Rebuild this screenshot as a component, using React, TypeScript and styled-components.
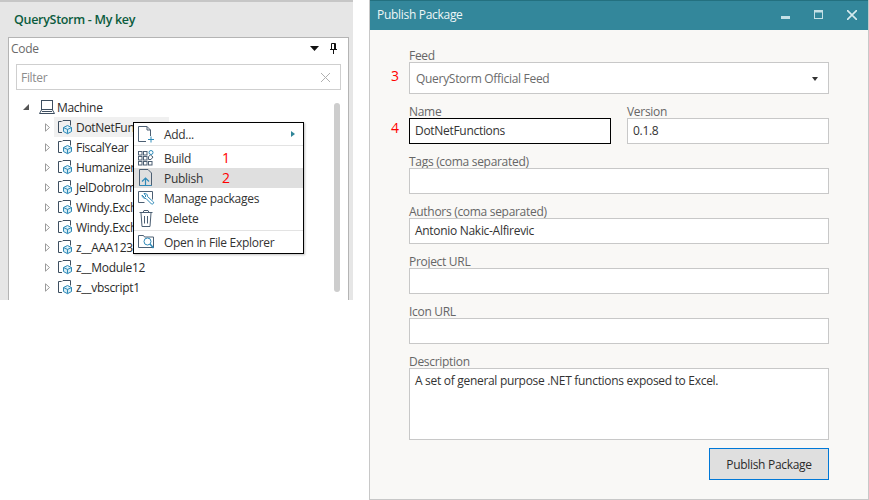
import React from "react";
import styled, { createGlobalStyle } from "styled-components";

const Global = createGlobalStyle`
  html, body { margin: 0; padding: 0; background: #fff; }
  body { font-family: "Open Sans", "Noto Sans", sans-serif; font-size: 12px; letter-spacing: -0.3px; width: 869px; height: 500px; overflow: hidden; }
`;
const Page = styled.div`display: flex; width: 869px; height: 500px; align-items: flex-start; gap: 16px;`;
const Left = styled.section`
  position: relative; width: 353px; height: 300px; flex: none; box-sizing: border-box;
  background: #e6e6e6; border-top: 2px solid #c6c6c6; padding: 0 4px 0 8px;
  display: flex; flex-direction: column;
`;
const AppTitle = styled.h1`
  margin: 0 0 0 6px; height: 35px; line-height: 36px; font-size: 12.5px; font-weight: 600; color: #0c5c3e; letter-spacing: -0.3px;
`;
const CodeBox = styled.div`
  flex: 1; background: #fff; border: 1px solid #b4b4b4; border-bottom: 0; padding: 0 7px; position: relative; display: flex; flex-direction: column;
`;
const CodeHead = styled.div`display: flex; align-items: center; height: 20px; margin: 0 -7px; padding: 0 11px 0 2px; justify-content: space-between; color: #6a6a6a; font-size: 12px;`;
const HeadIcons = styled.div`display: flex; gap: 11px; align-items: center;`;
const Filter = styled.div`
  margin-top: 6px; height: 26px; box-sizing: border-box; border: 1px solid #cfcfcf; display: flex; align-items: center; justify-content: space-between; padding: 0 10px 0 4px; color: #8c8c8c;
`;
const Tree = styled.div`margin-top: 7px; display: flex; flex-direction: column;`;
const Row = styled.div<{ $depth: number }>`
  height: 20px; display: flex; align-items: center; color: #2a2a2a; white-space: nowrap; position: relative;
  margin-left: ${(p) => (p.$depth ? 28 : 6)}px; width: ${(p) => (p.$depth ? 276 : 298)}px;
`;
const RowBg = styled.span`position: absolute; left: 10px; top: 0; bottom: 0; width: 115px; background: #f0f0f0;`;
const RowIcon = styled.span<{ $root?: boolean }>`display: inline-flex; position: relative; flex: none; margin: 0 ${(p) => (p.$root ? 2 : 3)}px 0 ${(p) => (p.$root ? 9 : 6)}px;`;
const RowText = styled.span`position: relative; font-size: 12px;`;
const Scroll = styled.div`position: absolute; left: 325px; top: 65px; bottom: 8px; width: 6px; background: #cdcdcd; border-radius: 3px;`;
const Menu = styled.div`
  position: absolute; left: 133px; top: 120px; width: 171px; height: 132px; box-sizing: border-box; background: #fff; border: 1px solid #000;
  box-shadow: 1px 1px 2px rgba(0,0,0,.25); padding-top: 1px; display: flex; flex-direction: column; color: #333;
`;
const MenuRow = styled.div<{ $active?: boolean; $h?: number }>`
  height: ${(p) => p.$h ?? 20}px; display: flex; align-items: center; position: relative; background: ${(p) => (p.$active ? "#dfdfdf" : "transparent")};
`;
const MenuIcon = styled.span`width: 24px; margin-right: 6px; flex: none; display: flex; justify-content: center;`;
const MenuLabel = styled.span`width: 58px; flex: none; white-space: nowrap; font-size: 12px;`;
const Sep = styled.div<{ $last?: boolean }>`height: 1px; flex: none; background: #e3e3e3; margin: ${(p) => (p.$last ? "2px 0 0" : "1px 0 2px")};`;
const RedNum = styled.span`color: #f00; font-size: 14px; line-height: 1; letter-spacing: 0;`;
const Arrow = styled.span`position: absolute; right: 8px; top: 7px; border-left: 4px solid #2f8598; border-top: 3.5px solid transparent; border-bottom: 3.5px solid transparent;`;

const Dialog = styled.section`
  width: 500px; height: 500px; flex: none; box-sizing: border-box; border: 1px solid #c8c8c8; border-top: 0; background: #f9f8f6;
  display: flex; flex-direction: column;
`;
const TitleBar = styled.header`
  height: 30px; flex: none; box-sizing: border-box; background: #33879b; border-top: 1px solid #23707f; color: #eef6f7; display: flex; align-items: center; justify-content: space-between; padding: 0 11px 2px 7px; font-size: 12px; font-weight: 400;
`;
const WinButtons = styled.div`display: flex; gap: 24px; align-items: center;`;
const Form = styled.form`padding: 8px 39px 0 39px; display: flex; flex-direction: column; position: relative; flex: 1;`;
const Field = styled.div`display: flex; flex-direction: column; position: relative; flex: 1;`;
const FixedField = styled(Field)`flex: none;`;
const Line = styled.div`display: flex; gap: 16px;`;
const Label = styled.label`height: 12px; line-height: 12px; color: #666; font-size: 12px; margin-top: 12px; white-space: nowrap;`;
const Input = styled.div<{ $h?: number; $focus?: boolean }>`
  box-sizing: border-box; height: ${(p) => p.$h ?? 26}px; background: #fff; border: 1px solid ${(p) => (p.$focus ? "#000" : "#c8c8c8")};
  padding: 4px 5px 0 5px; color: #333; line-height: 16px; font-size: 12px; display: flex; justify-content: space-between;
`;
const Select = styled(Input)`align-items: center; padding: 1px 10px 0 6px; color: #6b6b6b; height: 32px;`;
const Caret = styled.span`border-top: 4px solid #333; border-left: 3.5px solid transparent; border-right: 3.5px solid transparent;`;
const Annot = styled(RedNum)<{ $top: number }>`position: absolute; left: -18px; top: ${(p) => p.$top}px;`;
const Actions = styled.div`display: flex; justify-content: flex-end; margin-top: 8px;`;
const Btn = styled.button`
  width: 120px; height: 32px; box-sizing: border-box; background: #dfdfdf; border: 1px solid #0078d7; font: inherit; letter-spacing: inherit; font-size: 12px; color: #2b2b2b; padding: 0;
`;

const Stroke = "#4c5f73", Blue = "#2f8ab8";

const Pkg = () => (
  <svg width="16" height="16" viewBox="0 0 16 16" fill="none">
    <path d="M5 13.5H1.5V2.5h3M5 2.5l1-1h7.5v5" stroke="#3d4e60" strokeWidth="1" />
    <path d="M10.5 6.5l4 2v4l-4 2.2-4-2.2v-4z" fill="#d6edf6" stroke={Blue} strokeWidth="1" />
    <path d="M6.5 8.5l4 2 4-2M10.5 10.5v4" stroke={Blue} strokeWidth="1" />
  </svg>
);
const Machine = () => (
  <svg width="16" height="16" viewBox="0 0 16 16" fill="none" stroke="#3d4e60">
    <rect x="2.5" y="1.5" width="11" height="9" />
    <path d="M2.5 11l-2 3.5h15l-2-3.5M3 12.500h10" />
  </svg>
);
const Expander = ({ open }: { open?: boolean }) =>
  open ? (
    <svg width="8" height="8" viewBox="0 0 8 8"><path d="M7 1v6H1z" fill="#555" /></svg>
  ) : (
    <svg width="7" height="9" viewBox="0 0 7 9" fill="#fff" stroke="#9a9a9a"><path d="M1.5 .8l4 3.7-4 3.7z" /></svg>
  );
const AddIco = () => (
  <svg width="17" height="17" viewBox="0 0 17 17" fill="none" stroke={Stroke}>
    <path d="M8 15.500H.5V.5H9l3.500 3.500v6M9 .5V4h3.500" />
    <path d="M13 10.500v6M10 13.500h6" stroke={Blue} />
  </svg>
);
const BuildIco = () => (
  <svg width="16" height="16" viewBox="0 0 16 16" fill="none" stroke={Stroke}>
    {[1, 6, 11].map((y) => [0, 5].map((x) => <rect key={`${x}${y}`} x={x + 0.5} y={y + 0.5} width="3.500" height="3.500" />))}
    <rect x="10.500" y="11.500" width="3.500" height="3.500" />
    <path d="M10.500 6.500l2-1.500 2.500 2-2 2.500h-2.500z" />
    <circle cx="13" cy="2.500" r="2" stroke={Blue} />
  </svg>
);
const PubIco = () => (
  <svg width="16" height="18" viewBox="0 0 16 18" fill="none" stroke={Stroke}>
    <path d="M1.500 16.500V.5H10l3.500 3.500v12.500z" />
    <path d="M7.500 16V9M4 12.500l3.500-3.500 3.500 3.500M1.500 16.500h12" stroke={Blue} strokeWidth="1.200" />
  </svg>
);
const ManageIco = () => (
  <svg width="17" height="17" viewBox="0 0 17 17" fill="none" stroke={Stroke}>
    <path d="M.5 12.500V1.500h14v8M.5 12.500h6" />
    <path d="M4 5l2.500 2.500 1.500-1.500-2-2.500c2-.5 4 1 3.500 3l6 5.500c.5 1-.5 2.500-2 2L8 8.500C6 9 4 7 4 5z" fill="#fff" stroke={Blue} />
  </svg>
);
const TrashIco = () => (
  <svg width="14" height="17" viewBox="0 0 14 17" fill="none" stroke={Stroke}>
    <path d="M.5 2.500h13M4 2.500l1-2h4l1 2M2 3l1 13.500h8L12 3M5.500 6v7.500M8.500 6v7.500" />
  </svg>
);
const ExplorerIco = () => (
  <svg width="17" height="16" viewBox="0 0 17 16" fill="none" stroke={Stroke}>
    <path d="M.5 13.500V1.500h5l1 1.500h9v10.500z" />
    <circle cx="9.500" cy="7.500" r="3.500" stroke={Blue} />
    <path d="M12 10l3.500 4" stroke={Blue} strokeWidth="1.500" />
  </svg>
);
const MinIcon = styled.svg`margin-top: 5px;`;

const modules = ["DotNetFunctions", "FiscalYear", "Humanizer", "JelDobroIme", "Windy.Exchange", "Windy.Exchange2", "z__AAA123", "z__Module12", "z__vbscript1"];

export default function App() {
  return (
    <Page>
      <Global />
      <Left>
        <AppTitle>QueryStorm - My key</AppTitle>
        <CodeBox>
          <CodeHead>
            <span>Code</span>
            <HeadIcons>
              <svg width="9" height="5" viewBox="0 0 9 5"><path d="M0 0h9L4.500 5z" fill="#111" /></svg>
              <svg width="7" height="11" viewBox="0 0 7 11" fill="none" stroke="#111"><path d="M1.500.5h4v6h-4zM0 6.500h7M3.500 7v4M4.500 1v5" /></svg>
            </HeadIcons>
          </CodeHead>
          <Filter>
            <span>Filter</span>
            <svg width="9" height="9" viewBox="0 0 9 9" stroke="#b0b0b0"><path d="M0 0l9 9M9 0L0 9" /></svg>
          </Filter>
          <Tree>
            <Row $depth={0}>
              <Expander open />
              <RowIcon $root><Machine /></RowIcon>
              <RowText>Machine</RowText>
            </Row>
            {modules.map((m, i) => (
              <Row key={m} $depth={1}>
                {i === 0 && <RowBg />}
                <Expander />
                <RowIcon><Pkg /></RowIcon>
                <RowText>{m}</RowText>
              </Row>
            ))}
          </Tree>
          <Scroll />
        </CodeBox>
        <Menu>
          <MenuRow><MenuIcon><AddIco /></MenuIcon><MenuLabel>Add...</MenuLabel><Arrow /></MenuRow>
          <Sep />
          <MenuRow><MenuIcon><BuildIco /></MenuIcon><MenuLabel>Build</MenuLabel><RedNum>1</RedNum></MenuRow>
          <MenuRow $active><MenuIcon><PubIco /></MenuIcon><MenuLabel>Publish</MenuLabel><RedNum>2</RedNum></MenuRow>
          <MenuRow><MenuIcon><ManageIco /></MenuIcon><MenuLabel>Manage packages</MenuLabel></MenuRow>
          <MenuRow><MenuIcon><TrashIco /></MenuIcon><MenuLabel>Delete</MenuLabel></MenuRow>
          <Sep $last />
          <MenuRow $h={22}><MenuIcon><ExplorerIco /></MenuIcon><MenuLabel>Open in File Explorer</MenuLabel></MenuRow>
        </Menu>
      </Left>
      <Dialog>
        <TitleBar>
          <span>Publish Package</span>
          <WinButtons>
            <MinIcon width="9" height="4" viewBox="0 0 9 4"><rect width="9" height="3" y="1" fill="#c4e0e6" /></MinIcon>
            <svg width="9" height="9" viewBox="0 0 9 9" fill="none" stroke="#c4e0e6"><rect x=".5" y=".5" width="8" height="8" /><path d="M0 1.500h9" strokeWidth="2" /></svg>
            <svg width="10" height="10" viewBox="0 0 10 10" stroke="#d6eaee" strokeWidth="1.600"><path d="M0 0l10 10M10 0L0 10" /></svg>
          </WinButtons>
        </TitleBar>
        <Form>
          <FixedField>
            <Label>Feed</Label>
            <Annot $top={31}>3</Annot>
            <Select><span>QueryStorm Official Feed</span><Caret /></Select>
          </FixedField>
          <Line>
            <Field>
              <Label>Name</Label>
              <Annot $top={27}>4</Annot>
              <Input $focus>DotNetFunctions</Input>
            </Field>
            <Field>
              <Label>Version</Label>
              <Input>0.1.8</Input>
            </Field>
          </Line>
          <FixedField><Label>Tags (coma separated)</Label><Input /></FixedField>
          <FixedField><Label>Authors (coma separated)</Label><Input>Antonio Nakic-Alfirevic</Input></FixedField>
          <FixedField><Label>Project URL</Label><Input /></FixedField>
          <FixedField><Label>Icon URL</Label><Input /></FixedField>
          <FixedField><Label>Description</Label><Input $h={72}>A set of general purpose .NET functions exposed to Excel.</Input></FixedField>
          <Actions><Btn type="button">Publish Package</Btn></Actions>
        </Form>
      </Dialog>
    </Page>
  );
}
